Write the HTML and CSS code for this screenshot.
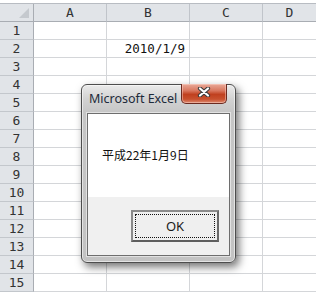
FILE: index.html
```html
<!DOCTYPE html>
<html lang="ja">
<head>
  <meta charset="UTF-8">
  <title>Microsoft Excel</title>
  <link rel="stylesheet" href="styles.css">
</head>
<body>
  <div class="sheet">
    <div class="row head">
      <div class="cell rh corner"><span class="tri"></span></div>
      <div class="cell col-a">A</div>
      <div class="cell col-b">B</div>
      <div class="cell col-c">C</div>
      <div class="cell col-d">D</div>
    </div>
    <div class="row"><div class="cell rh">1</div><div class="cell col-a"></div><div class="cell col-b"></div><div class="cell col-c"></div><div class="cell col-d"></div></div>
    <div class="row"><div class="cell rh">2</div><div class="cell col-a"></div><div class="cell col-b value">2010/1/9</div><div class="cell col-c"></div><div class="cell col-d"></div></div>
    <div class="row"><div class="cell rh">3</div><div class="cell col-a"></div><div class="cell col-b"></div><div class="cell col-c"></div><div class="cell col-d"></div></div>
    <div class="row"><div class="cell rh">4</div><div class="cell col-a"></div><div class="cell col-b"></div><div class="cell col-c"></div><div class="cell col-d"></div></div>
    <div class="row"><div class="cell rh">5</div><div class="cell col-a"></div><div class="cell col-b"></div><div class="cell col-c"></div><div class="cell col-d"></div></div>
    <div class="row"><div class="cell rh">6</div><div class="cell col-a"></div><div class="cell col-b"></div><div class="cell col-c"></div><div class="cell col-d"></div></div>
    <div class="row"><div class="cell rh">7</div><div class="cell col-a"></div><div class="cell col-b"></div><div class="cell col-c"></div><div class="cell col-d"></div></div>
    <div class="row"><div class="cell rh">8</div><div class="cell col-a"></div><div class="cell col-b"></div><div class="cell col-c"></div><div class="cell col-d"></div></div>
    <div class="row"><div class="cell rh">9</div><div class="cell col-a"></div><div class="cell col-b"></div><div class="cell col-c"></div><div class="cell col-d"></div></div>
    <div class="row"><div class="cell rh">10</div><div class="cell col-a"></div><div class="cell col-b"></div><div class="cell col-c"></div><div class="cell col-d"></div></div>
    <div class="row"><div class="cell rh">11</div><div class="cell col-a"></div><div class="cell col-b"></div><div class="cell col-c"></div><div class="cell col-d"></div></div>
    <div class="row"><div class="cell rh">12</div><div class="cell col-a"></div><div class="cell col-b"></div><div class="cell col-c"></div><div class="cell col-d"></div></div>
    <div class="row"><div class="cell rh">13</div><div class="cell col-a"></div><div class="cell col-b"></div><div class="cell col-c"></div><div class="cell col-d"></div></div>
    <div class="row"><div class="cell rh">14</div><div class="cell col-a"></div><div class="cell col-b"></div><div class="cell col-c"></div><div class="cell col-d"></div></div>
    <div class="row"><div class="cell rh">15</div><div class="cell col-a"></div><div class="cell col-b"></div><div class="cell col-c"></div><div class="cell col-d"></div></div>
  </div>

  <!-- message box over the sheet -->
  <div class="dialog">
    <div class="titlebar">
      <span class="title">Microsoft Excel</span>
      <button type="button" class="close" aria-label="閉じる">
        <svg width="14" height="10" viewBox="0 0 14 10">
          <path d="M3 1.5 L11 8.5 M11 1.5 L3 8.5" stroke="#3a3a3a" stroke-width="4.2" stroke-linecap="round"/>
          <path d="M3 1.5 L11 8.5 M11 1.5 L3 8.5" stroke="#fff" stroke-width="2.2" stroke-linecap="round"/>
        </svg>
      </button>
    </div>
    <div class="client">
      <div class="message">平成22年1月9日</div>
      <div class="buttons">
        <button type="button" class="ok"><span>OK</span></button>
      </div>
    </div>
  </div>
</body>
</html>
```

FILE: styles.css
```css
* {
  box-sizing: border-box;
  margin: 0;
  padding: 0;
}
body {
  width: 316px;
  height: 294px;
  overflow: hidden;
  background-color: #fff;
  font-family: "DejaVu Sans Mono", "Liberation Mono", monospace;
  color: #222;
}
.sheet {
  margin-top: 3px;
  border-top: 1px solid #b8bcc2;
}
.row {
  display: flex;
  height: 18px;
}
.cell {
  height: 18px;
  border-right: 1px solid #d4d6d9;
  border-bottom: 1px solid #d4d6d9;
  font-size: 12.5px;
  line-height: 17px;
}
.rh {
  width: 34px;
  flex: none;
  text-align: center;
  background-color: #e1e4e8;
  border-right-color: #a9adb3;
  border-bottom-color: #c3c7cc;
  color: #333;
  font-size: 13px;
}
.col-a { width: 73px; flex: none; }
.col-b { width: 83px; flex: none; }
.col-c { width: 73px; flex: none; }
.col-d { flex: 1; border-right: none; }
.head .cell {
  background-color: #e1e4e8;
  border-right-color: #c0c4ca;
  border-bottom-color: #a9adb3;
  text-align: center;
  color: #333;
  font-size: 13px;
}
.head .rh {
  border-right-color: #a9adb3;
}
.corner {
  position: relative;
}
.corner .tri {
  position: absolute;
  right: 4px;
  bottom: 3px;
  width: 0;
  height: 0;
  border-left: 10px solid transparent;
  border-bottom: 10px solid #c5c9ce;
}
.value {
  text-align: right;
  padding-right: 4px;
  color: #111;
}

.dialog {
  position: absolute;
  left: 81px;
  top: 84px;
  width: 155px;
  height: 179px;
  padding: 0 5px 6px;
  border: 1px solid #4d4d4d;
  border-radius: 6px;
  background: linear-gradient(#eaeaea 0, #d2d2d2 14px, #c6c6c6 28px, #c3c3c3 100%);
  box-shadow: inset 0 0 0 1px rgba(255, 255, 255, 0.55), 3px 4px 9px rgba(0, 0, 0, 0.55);
  font-family: "Noto Sans", "Noto Sans CJK JP", sans-serif;
}
.titlebar {
  position: relative;
  height: 28px;
}
.title {
  display: block;
  padding: 6px 0 0 2px;
  font-size: 12.5px;
  line-height: 16px;
  color: #1d2a3a;
}
.close {
  position: absolute;
  left: 94px;
  top: -1px;
  width: 46px;
  height: 20px;
  display: flex;
  align-items: center;
  justify-content: center;
  padding-bottom: 4px;
  border: 1px solid #6b2a20;
  border-top: none;
  border-radius: 0 0 5px 5px;
  background: linear-gradient(#e9aa99 0, #d9775f 35%, #c0401f 55%, #c8512f 80%, #dd8a70 100%);
  box-shadow: inset 0 0 0 1px rgba(255, 220, 210, 0.45);
}
.client {
  height: 143px;
  border: 1px solid #6e6e6e;
  box-shadow: 0 0 0 1px rgba(255, 255, 255, 0.5);
  background-color: #f0f0f0;
}
.message {
  height: 83px;
  padding: 33px 0 0 14px;
  background-color: #fff;
  font-family: "Noto Sans CJK JP", sans-serif;
  font-size: 12px;
  line-height: 16px;
  color: #111;
}
.buttons {
  padding: 13px 0 0 43px;
}
.ok {
  display: block;
  width: 88px;
  height: 32px;
  padding: 2px;
  border: 2px solid #767676;
  border-color: #8a8a8a #6a6a6a #5e5e5e #8a8a8a;
  background-color: #efefef;
  font-family: "Noto Sans", sans-serif;
  font-size: 13px;
  color: #1a1a1a;
}
.ok span {
  display: block;
  height: 100%;
  border: 1px dotted #111;
  line-height: 22px;
}
```
